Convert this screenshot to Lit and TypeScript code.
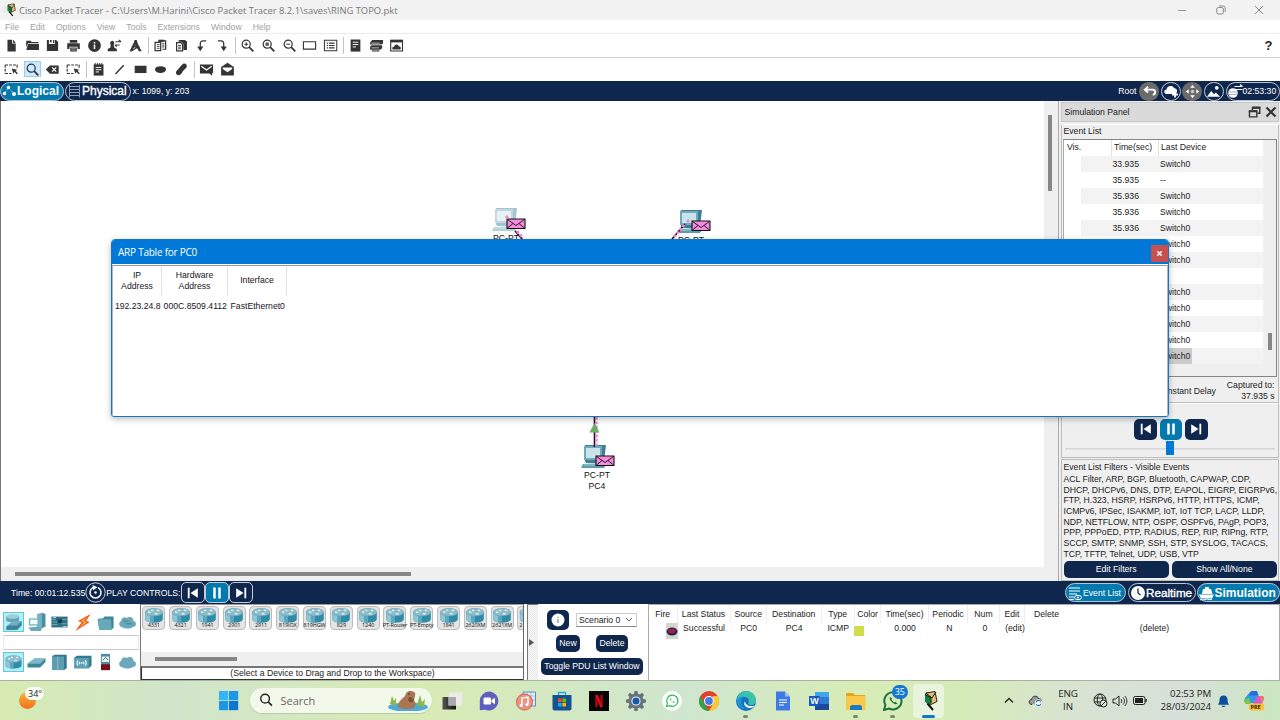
import { LitElement, html, css, svg, TemplateResult, SVGTemplateResult } from "lit";
import { customElement } from "lit/decorators.js";
import { classMap } from "lit/directives/class-map.js";

const icon = (body: SVGTemplateResult, w = 16, h = 16, vb = "0 0 16 16"): TemplateResult =>
  html`<svg width=${w} height=${h} viewBox=${vb}>${body}</svg>`;

const INK = "#333436";
const lens = svg`<circle cx="6.6" cy="6.6" r="4.3" fill="none" stroke=${INK} stroke-width="1.3"/><path d="M9.8 9.8L14.2 14.2" stroke=${INK} stroke-width="1.9"/>`;

const glyph: Record<string, SVGTemplateResult> = {
  file: svg`<path fill=${INK} d="M3.7 1.8h5v4h3.8v8.6H3.7zM9.6 1.8l3 3.2h-3z"/>`,
  folder: svg`<path fill=${INK} d="M1.3 3h4.8l1 1.3h7.3v1.4H3.3L1.3 10zM3.4 6.3h11.5v6.6H1.3z"/>`,
  save: svg`<path fill=${INK} d="M2 2.2h2.2v4.2h6.3V2.2h1.3L14 4.3v9.6H2zM5.3 2.2h1.8v2.3H5.3zM8.6 2.2h1.2v3.2H8.6z"/>`,
  print: svg`<path fill=${INK} d="M4 2h8v3H4zM1.3 5.6h13.4v6H12.3V9.3H3.7v2.3H1.3zM4.5 10h7v4.4h-7z"/><path d="M5.6 11.4h4.8M5.6 12.9h4.8" stroke="#fff" stroke-width=".5"/>`,
  info: svg`<circle cx="8" cy="8" r="6.8" fill=${INK}/><path d="M8 7v4.6M8 4.3v1.5" stroke="#fff" stroke-width="1.6"/>`,
  user: svg`<path fill=${INK} d="M5.4 3a2.3 2.6 0 0 1 1.9 4.1c-.3.5-.1 1.200.3 1.500v1.600l2.900 1.400v2.400H.8v-2.400l2.900-1.400V8.600c.4-.3.4-1 .1-1.500A2.300 2.600 0 0 1 5.400 3z"/><path d="M9 4h6M8.500 7.500h5M12.500 2L15 4M8.500 7.500l2 1.700" stroke=${INK} stroke-width="1.200" fill="none"/>`,
  compass: svg`<path fill=${INK} d="M7 2h2.300l1.200 4 3.800 8h-2.800L8 7l-3.600 7H1.500L6 6z"/><path d="M3.800 9l8.500 1.200M3.500 13.800l8.500-5M5 6L14 13.500" stroke=${INK} stroke-width="1.300"/>`,
  copy: svg`<path d="M2.200 4.700h6v8.800h-6zM5.500 3h8v9h-3.500" fill="#fff" stroke=${INK} stroke-width="1.300"/><path d="M4 7h3M4 9h3M4 11h3M9.700 5.800h2.500M9.700 7.700h2.500M9.700 9.600h2.500" stroke=${INK} stroke-width=".9"/><path d="M6 1.800h6v2.200H6z" fill=${INK}/>`,
  paste: svg`<path fill=${INK} d="M5 2h6.500l2.300 1.500v9.200H10V6.200L7.500 4H5z"/><path d="M2.800 4.900h4.400l2 1.800v7H2.800z" fill="#fff" stroke=${INK} stroke-width="1.300"/><path d="M4.300 8h3.300M4.300 9.800h3.300M4.300 11.500h3.300" stroke=${INK} stroke-width=".9"/>`,
  undo: svg`<path d="M13 3H9.500C7.300 3 6.700 4.600 6.700 6.100v5" fill="none" stroke=${INK} stroke-width="1.300"/><path d="M3.400 9h6.600L6.700 14z" fill=${INK}/>`,
  redo: svg`<path d="M3 3h3.500c2.200 0 2.800 1.600 2.800 3.100v5" fill="none" stroke=${INK} stroke-width="1.300"/><path d="M6 9h6.600L9.300 14z" fill=${INK}/>`,
  zoomin: svg`${lens}<path d="M4.600 6.600h4M6.600 4.600v4" stroke=${INK} stroke-width="1.100"/>`,
  zoomreset: svg`${lens}<circle cx="6.600" cy="6.600" r="2" fill=${INK} opacity=".8"/>`,
  zoomout: svg`${lens}<path d="M4.600 6.600h4" stroke=${INK} stroke-width="1.100"/>`,
  rect: svg`<path d="M1.500 4h13v7.800h-13z" fill="none" stroke=${INK} stroke-width="1.200"/>`,
  list: svg`<path d="M1.500 2.500h13.200v11H1.500z" fill="none" stroke=${INK} stroke-width="1.100"/><path d="M4 5.500h1.300M4 8h1.300M4 10.500h1.300M6.300 5.500h6M6.300 8h6M6.300 10.500h6" stroke=${INK} stroke-width="1.300"/>`,
  doc: svg`<path fill=${INK} d="M2.800 1.600h10.400v12.900H2.800z"/><path d="M5 4.500h6M5 7h6M5 9.500h3.500" stroke="#fff" stroke-width="1"/>`,
  stack: svg`<path fill=${INK} d="M3.500 2.200h11.500v3.600L12.800 7H1.200V4.700zM2.800 7.800h11.200v3L12 12.500H1.200V9z"/><path d="M2.500 5.500h9M2.500 10.500h8" stroke="#ddd" stroke-width=".8"/><path d="M3 13.800h8" stroke=${INK} stroke-width="1.200"/>`,
  cloudwin: svg`<path d="M1.800 2.500h12.600v11.300H1.800z" fill="#fff" stroke=${INK} stroke-width="1.200"/><path d="M1.800 2h12.600v2.700H1.800z" fill=${INK}/><path fill=${INK} d="M4 12.200C2.700 10.700 4 9 5.400 9.400 6 6.500 9.700 6.300 10.200 8.800c2.200-.2 3.100 2 1.900 3.400z"/>`,
  select: svg`<path d="M1.300 3.200h13M1.300 3v9.500M1.300 12.300h6.700M14 3v4" stroke=${INK} stroke-width="1.200" stroke-dasharray="3 1.200" fill="none"/><path d="M8.300 7l6 1.200-2 1.200 2.400 2.700-1.200 1-2.300-2.700-1.200 2z" fill=${INK}/>`,
  lens,
  erase: svg`<path fill=${INK} d="M.8 8l4.500-4.400h9.300v8.900H5.300z"/><path d="M7.600 5.800l4.400 4.400M12 5.800l-4.400 4.400" stroke="#fff" stroke-width="1.300"/>`,
  note: svg`<path fill=${INK} d="M2.900 2.500h10.400v12H2.900z"/><path d="M4.500 1v2M6.800 1v2M9.200 1v2M11.500 1v2" stroke=${INK} stroke-width="1"/><path d="M5 5.800h6M5 8.200h6M5 10.600h3.500" stroke="#fff" stroke-width="1"/>`,
  line: svg`<path d="M3.700 12.800L12.500 3.500" stroke=${INK} stroke-width="1.500"/>`,
  box: svg`<path d="M1.800 4h12.600v7.800H1.800z" fill=${INK}/>`,
  oval: svg`<ellipse cx="8" cy="8" rx="5.900" ry="3.600" fill=${INK}/>`,
  blob: svg`<path fill=${INK} d="M9.500 2c2-1.200 5 .3 4 3.200-.8 2.100-2.700 2.400-3.900 4.500-1 2-2.600 4.900-5.300 4.300-2.800-.7-2.700-4-.9-5.300C5 7.500 6.500 4.200 9.500 2z"/>`,
  mail: svg`<path fill=${INK} d="M1 2.600h14v9.100h-1v3l-3-2.500H1z"/><path d="M2.500 4.500L8 8.600l5.500-4.100" stroke="#fff" stroke-width="1.300" fill="none"/>`,
  openmail: svg`<path fill=${INK} d="M8 .8l6.800 4.500v9.200H1.200V5.300z"/><path fill="#fff" d="M3 5.800h10v1.700L8 11 3 7.500z"/>`,
};

const row1 = ["file", "folder", "save", "print", "info", "user", "compass", "|", "copy", "paste", "undo", "redo", "|",
  "zoomin", "zoomreset", "zoomout", "rect", "list", "|", "doc", "stack", "cloudwin"];
const row2 = ["select", "lens", "erase", "select", "|", "note", "line", "box", "oval", "blob", "|", "mail", "openmail"];

const routerArt = svg`<path d="M1 7v8c0 3 5 4.600 11 4.600s11-1.600 11-4.600V7z" fill="#2f8ba8"/><path d="M1 7v8c0 2 2.500 3.500 6 4.200V9z" fill="#8fc5d4"/><path d="M7 10v9.200l5 .4V10z" fill="#5ba8be"/><ellipse cx="12" cy="6.500" rx="11" ry="4.800" fill="#8dbccb" stroke="#5c9db1" stroke-width=".6"/><path d="M4.500 6l3 .6M15.500 4l3 .5M8.500 3.800l2.500.8M13 8.200l3.500.5" stroke="#f4fbfd" stroke-width="1.600"/>`;

const kit: Record<string, SVGTemplateResult> = {
  net: svg`<path d="M2 4l5-2 9 1v7l-6 1-8-2z" fill="#5fa3b5"/><ellipse cx="9" cy="4" rx="7" ry="2.500" fill="#9fccd8"/><path d="M5 13l6-4 8 0v5l-5 5H2v-4z" fill="#3d8599"/><path d="M3 14l7-5h9l-5 5z" fill="#72b1c2"/>`,
  pc: svg`<path d="M11 1l6-1 3 1v14l-4 2h-5z" fill="#4a8fa2"/><path d="M11 1l5 .5V17h-5z" fill="#74b2c3"/><path d="M1.500 6h11v8h-11z" fill="#79b4c4"/><path d="M3 7.500h8v5H3z" fill="#f4fbfc"/><path d="M1 16l11-1 4 2-1 3H4z" fill="#6ba9ba"/>`,
  board: svg`<path d="M1 4h18v12H1z" fill="#2f6f85"/><path d="M1 7h5M2 10h6M1 13h7M13 7h6M12 12h6" stroke="#78b5c6" stroke-width="1"/><path d="M8 7h5v4H8z" fill="#173f4e"/><path d="M3 5h3M14 15h4" stroke="#c1e1e9"/>`,
  bolt: svg`<path d="M19 1L5 9l4 1.500L2 20l16-10-4-1.500z" fill="#f4501c"/><path d="M16 4L8 9l4 1-6 6 9-6-4-1.500z" fill="#ffc53a"/>`,
  folder: svg`<path d="M2 6h5l2-2h10v13l-3 1H3z" fill="#3f879b"/><path d="M1 7h15l1 12H3z" fill="#67a9bb"/>`,
  cloud: svg`<path d="M5 16C0 16-.5 10 3 9c0-4 4-5 6-3.500C12 3 17 5 16.500 8.500c4 .5 4 7-.5 7-3 2-8 2.500-11 .5z" fill="#6ba9ba"/><path d="M5 9h6M8 12h7" stroke="#3f8296" stroke-width="1.100"/>`,
  router: svg`<g transform="translate(.5 1.500) scale(.8)">${routerArt}</g>`,
  sw: svg`<path d="M0 12l8-6h12v4l-6 6H0z" fill="#3d8599"/><path d="M0 12l8-6h12l-6 6z" fill="#7db8c7"/>`,
  hub: svg`<path d="M2 3l3-1h13v15l-3 2H2z" fill="#33788d"/><path d="M2 4h13v15H2z" fill="#5c9fb2"/><path d="M8 4v15" stroke="#8ec3d0"/>`,
  wifi: svg`<path d="M1 5l3-2h16v11l-3 3H1z" fill="#33788d"/><path d="M1 5.500h16V17H1z" fill="#5c9fb2"/><path d="M5 8c-1.500 2-1.500 4 0 6M7 9.500c-1 1-1 2 0 3M13 8c1.500 2 1.500 4 0 6M11 9.500c1 1 1 2 0 3" stroke="#eef8fa" stroke-width="1.200" fill="none"/><circle cx="9" cy="11" r="1" fill="#fff"/>`,
  sec: svg`<path d="M5 1h10v18H5z" fill="#4a8fa2"/><path d="M6 4h8v6H6z" fill="#eaf4f6"/><path d="M5 12.500h10V19H5z" fill="#7b0d16"/><path d="M7 8l3-3 3 3" stroke="#2b6072" fill="none"/>`,
  wan: svg`<path d="M5 16C0 16-.5 10 3 9c0-4 4-5 6-3.500C12 3 17 5 16.500 8.500c4 .5 4 7-.5 7-3 2-8 2.500-11 .5z" fill="#6ba9ba"/>`,
};

const pcArt = (op: number) => svg`<g opacity=${op}><path d="M4 1h21l-2 17H4z" fill="#3e7f93"/><path d="M3 2h18v14H3z" fill="#6fa9bb"/><path d="M5 4h14v10H5z" fill="#c8e3ea"/><path d="M5 17h17l1 2H5z" fill="#3e7f93"/><path d="M2 20l22-1 2 1-3 4H0z" fill="#5d9db0"/><path d="M3 21h17" stroke="#a5cdd7"/></g>`;
const envelope = svg`<path d="M.500.500h18v9.500H.500z" fill="#f58ade" stroke="#111" stroke-width="1.100"/><path d="M1 1l8.500 6L18 1M1 9.500l5.500-4.500M18 9.500l-5.500-4.500" fill="none" stroke="#111" stroke-width=".9"/>`;

const playIcons: Record<string, SVGTemplateResult> = {
  prev: svg`<path d="M3.700 2.700v10.600" stroke="#fff" stroke-width="1.800"/><path d="M12.800 3.200v9.600L5.500 8z" fill="#fff"/>`,
  pause: svg`<path d="M5.500 2.500v11M10.500 2.500v11" stroke="#fff" stroke-width="2.500"/>`,
  next: svg`<path d="M12.300 2.700v10.600" stroke="#fff" stroke-width="1.800"/><path d="M3.200 3.200v9.600L10.500 8z" fill="#fff"/>`,
};

const playButtons = () => html`${["prev", "pause", "next"].map(
  (k) => html`<span class=${classMap({ play: true, on: k === "pause" })}>${icon(playIcons[k], 16, 16)}</span>`)}`;

@customElement("pt-toolbar")
class PtToolbar extends LitElement {
  static properties = { items: { attribute: false }, active: {}, help: { type: Boolean } };
  declare items: string[];
  declare active: string;
  declare help: boolean;
  static styles = css`
    :host { display: flex; align-items: center; padding-left: 1.4px; background: #fff; box-sizing: border-box; }
    .cell { width: 20.6px; flex: none; display: flex; justify-content: center; }
    .cell span { display: flex; justify-content: center; align-items: center; width: 17px; height: 16px; }
    .cell .on { background: #cce8ff; outline: 1px solid #99cdf3; outline-offset: -1px; }
    .sep { width: 1px; height: 17px; background: #c4c4c4; margin: 0 1.5px 0 2.3px; flex: none; }
    .help { margin-left: auto; margin-right: 7.5px; font: bold 13px "Liberation Sans", sans-serif; color: #222; }
    svg { width: 15px; height: 15px; }
  `;
  render() {
    return html`${this.items.map((n) => n === "|" ? html`<i class="sep"></i>`
      : html`<div class="cell"><span class=${classMap({ on: n === this.active })}>${icon(glyph[n])}</span></div>`)}
      ${this.help ? html`<b class="help">?</b>` : ""}`;
  }
}

@customElement("pt-workspace")
class PtWorkspace extends LitElement {
  static styles = css`
    :host { display: grid; grid-template: 466px 14px / 1043px 14px; background: #efefef; border-left: 1px solid #777; box-sizing: border-box; width: 1058px; height: 480px; }
    .canvas { position: relative; background: #fff; overflow: hidden; }
    .links { position: absolute; inset: 0; }
    .node { position: absolute; width: 34px; font: 8.67px/11px "Liberation Sans", sans-serif; color: #111; text-align: center; }
    .node svg { display: block; }
    .vbar { padding: 14px 0 0 4px; }
    .vbar i { display: block; width: 4px; height: 76px; background: #868686; }
    .hbar { grid-column: 1 / 3; padding: 5px 0 0 14px; }
    .hbar i { display: block; width: 396px; height: 4px; background: #868686; }
    .a { left: 491px; top: 106px; }
    .b { left: 676px; top: 108px; }
    .c { left: 580px; top: 343px; }
    .a .name, .b .name { margin-left: -6px; }
    .c .name { margin-left: -2px; }
  `;
  node(cls: string, label: string[], op: number) {
    return html`<div class="node ${cls}">
      ${icon(svg`<g>${pcArt(op)}</g><g transform="translate(14.5 11.5)">${envelope}</g>`, 34, 26, "0 0 34 26")}
      ${label.map((l) => html`<div class="name">${l}</div>`)}</div>`;
  }
  render() {
    return html`
      <div class="canvas">
        ${this.node("a", ["PC-PT"], 0.45)} ${this.node("b", ["PC-PT"], 1)} ${this.node("c", ["PC-PT", "PC4"], 1)}
        <svg class="links" width="1043" height="466">
          <path d="M514 130l8 9M671 138l13-15M593.5 316v30" stroke="#111" stroke-width="1.6"/>
          <path d="M505 115l3 3M516 130l6 7M673 136l11-13M686 121l2-2M595.3 316v29" stroke="#ef85d8" stroke-width="2.8" stroke-dasharray="2.8 1.6"/>
          <path d="M593.5 322l5 9.5h-10z" fill="#6cae62"/>
        </svg>
      </div>
      <div class="vbar"><i></i></div>
      <div class="hbar"><i></i></div>`;
  }
}

const events: [string, string][] = [["33.935", "Switch0"], ["35.935", "--"], ["35.936", "Switch0"], ["35.936", "Switch0"],
  ["35.936", "Switch0"], ["35.937", "Switch0"], ["35.937", "Switch0"], ["37.932", "--"], ["37.933", "Switch0"],
  ["37.933", "Switch0"], ["37.934", "Switch0"], ["37.934", "Switch0"], ["37.935", "Switch0"]];
const filters = ["ACL Filter, ARP, BGP, Bluetooth, CAPWAP, CDP,", "DHCP, DHCPv6, DNS, DTP, EAPOL, EIGRP, EIGRPv6,",
  "FTP, H.323, HSRP, HSRPv6, HTTP, HTTPS, ICMP,", "ICMPv6, IPSec, ISAKMP, IoT, IoT TCP, LACP, LLDP,",
  "NDP, NETFLOW, NTP, OSPF, OSPFv6, PAgP, POP3,", "PPP, PPPoED, PTP, RADIUS, REP, RIP, RIPng, RTP,",
  "SCCP, SMTP, SNMP, SSH, STP, SYSLOG, TACACS,", "TCP, TFTP, Telnet, UDP, USB, VTP"];

@customElement("pt-simulation")
class PtSimulation extends LitElement {
  static styles = css`
    :host { display: flex; flex-direction: column; width: 222px; height: 480px; box-sizing: border-box; padding: 1px 1px 0 2px; background: #efefef; border-left: 1px solid #aaa; font: 8.67px/12px "Liberation Sans", sans-serif; color: #1b1b22; }
    .head { height: 20px; background: #dadada; border: 1px solid #c6c6c6; box-sizing: border-box; display: flex; align-items: center; padding: 0 1px 0 2.5px; margin-bottom: 2px; }
    .head span { flex: 1; }
    .gap { width: 4px; }
    .group { border: 1px solid #bdbdbd; border-top-color: #fff; box-sizing: border-box; }
    .list { height: 279px; display: flex; flex-direction: column; }
    .cap { height: 14px; padding-left: 1.5px; line-height: 13px; }
    .table { height: 239px; box-sizing: border-box; border: 1px solid #858585; border-left-color: #aaa; margin: 0 1px 0 1px; display: grid; grid-template: 16px 1fr / 199px 1fr; }
    .th { background: #fff; display: grid; grid-template-columns: 46.5px 47px 1fr; align-items: center; }
    .th span { padding-left: 2.5px; border-left: 1px solid #e3e3e3; line-height: 15px; height: 16px; }
    .th span:first-child { border: 0; padding-left: 3px; }
    .body { background: #fff; height: 208px; grid-row: 2; }
    .tr { height: 16px; margin-left: 17px; display: grid; grid-template-columns: 29.5px 47.5px auto 1fr; line-height: 16.5px; }
    .tr span { padding-left: 2px; }
    .tr:nth-child(odd) { background: #f3f3f3; }
    .tr .sel { background: #cbcbcb; padding-right: 2px; }
    .thumb { grid-column: 2; grid-row: 2; width: 4px; height: 17px; background: #868686; margin: 177px 0 0 5px; }
    .opts { flex: 1; display: flex; justify-content: flex-end; align-items: center; line-height: 11px; gap: 11px; padding: 3px 3.5px 0 0; text-align: right; }
    .ctl { height: 55px; padding: 15px 0 0 2px; }
    .plays { display: flex; justify-content: center; gap: 2.7px; }
    .play { width: 22.7px; height: 20.5px; border-radius: 5px; background: #10274d; display: flex; align-items: center; justify-content: center; }
    .on { background: #0479ad; }
    .slider { height: 14px; margin: 1.5px 3px 0 1px; display: flex; justify-content: center; background: linear-gradient(#d6d6d6, #d6d6d6) 0 7px / 100% 1.5px no-repeat; }
    .slider i { width: 8px; height: 14px; background: #0078d7; }
    .flt { height: 122px; margin-top: 1px; border-top: 1px solid #bdbdbd; padding: 1px 1px 0 1.5px; white-space: nowrap; }
    .names { line-height: 10.67px; margin-top: 1px; }
    .btns { display: grid; grid-template-columns: 1fr 1fr; gap: 3px; margin: 2px 0 0; }
    .btns b { font-weight: 400; background: #10274d; color: #fff; border-radius: 5px; height: 17px; line-height: 17px; text-align: center; }
  `;
  render() {
    return html`
      <div class="head"><span>Simulation Panel</span>
        ${icon(svg`<path d="M5.500 5V2.500h9v6.500H12M1.800 6.500h9v7h-9z" fill="none" stroke="#333" stroke-width="1.700"/><path d="M1 6.500h10.500M5 2h10.300" stroke="#333" stroke-width="2.600"/>`, 13, 14, "0 0 16 15")}
        <i class="gap"></i>
        ${icon(svg`<path d="M2 2l12 12M14 2L2 14" stroke="#333" stroke-width="3"/>`, 12, 12)}</div>
      <div class="group list">
        <div class="cap">Event List</div>
        <div class="table">
          <div class="th"><span>Vis.</span><span>Time(sec)</span><span>Last Device</span></div>
          <div class="body">${events.map(([t, d], i) => html`<div class="tr"><i></i><span>${t}</span><span class=${classMap({ sel: i === events.length - 1 })}>${d}</span></div>`)}</div>
          <i class="thumb"></i>
        </div>
        <div class="opts"><span>Constant Delay</span><span>Captured to:<br />37.935 s</span></div>
      </div>
      <div class="group ctl"><div class="plays">${playButtons()}</div><div class="slider"><i></i></div></div>
      <div class="group flt"><div>Event List Filters - Visible Events</div>
        <div class="names">${filters.map((f) => html`<div>${f}</div>`)}</div>
        <div class="btns"><b>Edit Filters</b><b>Show All/None</b></div></div>`;
  }
}

@customElement("pt-arp")
class PtArp extends LitElement {
  static styles = css`
    :host { display: flex; flex-direction: column; box-sizing: border-box; width: 1058px; height: 178px; background: #fff; border: 1px solid #1a74bd; border-radius: 4px 4px 3px 3px; box-shadow: 0 2px 6px rgba(0, 0, 0, .28); overflow: hidden; font: 8.67px/10.67px "Liberation Sans", sans-serif; color: #15151c; }
    .bar { height: 24px; background: #0078d7; color: #fff; display: flex; align-items: center; justify-content: space-between; padding: 0 .5px 0 6px; font: 10px "Open Sans", sans-serif; letter-spacing: -.24px; flex: none; }
    .x { width: 16.5px; height: 16.5px; margin-top: 3px; background: #c75050; display: flex; align-items: center; justify-content: center; }
    .in { flex: 1; margin-top: 1px; border: 1px solid #b0b6c4; border-top-color: #9a9a9a; border-bottom: 0; }
    .grid { display: grid; grid-template: 29px 22px / 49px 66px 59px; text-align: center; align-items: center; }
    .h { height: 29px; display: flex; align-items: center; justify-content: center; border-right: 1px solid #e2e2e2; }
    .grid span { white-space: nowrap; padding-left: .5px; }
  `;
  render() {
    return html`<div class="bar"><span>ARP Table for PC0</span><span class="x">${icon(svg`<path d="M2 2l4 4M6 2L2 6" stroke="#fff" stroke-width="1.200"/>`, 9, 9, "0 0 8 8")}</span></div>
      <div class="in"><div class="grid"><div class="h">IP<br />Address</div><div class="h">Hardware<br />Address</div><div class="h">Interface</div>
        <span>192.23.24.8</span><span>000C.8509.4112</span><span>FastEthernet0</span></div></div>`;
  }
}

const models = ["4331", "4321", "1941", "2901", "2911", "819IOX", "819HGW", "829", "1240", "PT-Router", "PT-Empty", "1841", "2620XM", "2621XM"];

@customElement("pt-bottom")
class PtBottom extends LitElement {
  static styles = css`
    :host { display: flex; height: 76px; background: #fff; font: 8.67px/12px "Liberation Sans", sans-serif; color: #1b1b22; }
    .kit { width: 141px; box-sizing: border-box; padding: 7.5px 1px 0 3px; border-right: 1px solid #777; }
    .line { display: grid; grid-template-columns: repeat(6, 22.9px); }
    .line span { display: flex; justify-content: center; align-items: center; width: 21px; height: 20px; box-sizing: border-box; }
    .line .on { background: #aef0f7; border: 1px solid #6cc5d3; }
    .kit .find { height: 15px; margin: 3px 0 2.5px; box-sizing: border-box; border: 1px solid #c9c9c9; border-left-color: #e8e8e8; border-right-color: #e8e8e8; }
    .devs { width: 383px; display: flex; flex-direction: column; border-top: 1px solid #999; border-right: 1px solid #666; box-sizing: border-box; }
    .cards { height: 48px; display: flex; gap: 3.8px; padding: 1px 0 0 1.3px; overflow: hidden; box-sizing: border-box; }
    .card { width: 23px; height: 24px; flex: none; box-sizing: border-box; border: 1px solid #bbb; border-radius: 4px; background: #e4e4e4; text-align: center; font: 5.5px/7px "Open Sans", sans-serif; color: #111; white-space: nowrap; }
    .card svg { display: block; margin: 0 auto; }
    .card span { display: block; margin: -1.5px -3px 0; letter-spacing: -.1px; }
    .cut { flex: 1; width: auto; min-width: 0; border-right: 0; border-radius: 4px 0 0 4px; }
    .cut svg { margin: 0 0 0 .5px; }
    .cut span { margin: -1.5px 0 0; }
    .scroll { height: 14px; background: #efefef; padding: 5px 0 0 14px; box-sizing: border-box; }
    .scroll i { display: block; width: 82px; height: 4px; background: #868686; }
    .hint { flex: 1; border: 1px solid #333; border-top: 2px solid #777; border-right: 0; text-align: center; line-height: 11px; }
    .grip { width: 11px; margin-left: 3px; border-left: 1px solid #777; border-top: 1px solid #777; box-sizing: border-box; background: repeating-conic-gradient(#e6e6e6 0 25%, #fbfbfb 0 50%) 0 0 / 2px 2px; display: flex; align-items: center; }
    .scen { width: 110px; box-sizing: border-box; display: flex; flex-direction: column; padding: 5.5px 5px 0 3px; background: #fff; gap: 5.7px; }
    .r { display: flex; align-items: center; }
    .info { width: 22px; height: 20px; background: #10274d; border-radius: 5px; margin: 0 7px 0 6px; display: flex; align-items: center; justify-content: center; }
    .combo { width: 61px; height: 14px; border: 1px solid #ccc; border-bottom-color: #888; box-sizing: border-box; display: flex; align-items: center; justify-content: space-between; padding: 0 3px 0 2px; white-space: nowrap; }
    .btn { background: #10274d; color: #fff; border-radius: 5px; height: 17px; line-height: 17px; text-align: center; white-space: nowrap; }
    .new { width: 24px; margin-left: 15px; } .del { width: 32px; margin-left: 16px; }
    .pdus { flex: 1; border: 1px solid #aaa; border-bottom: 0; box-sizing: border-box; display: grid; align-content: start; grid-template-columns: 28.5px 53px 36.5px 54.5px 33.5px 26px 48px 39px 32px 25px 1fr; grid-template-rows: 18px 17px; text-align: center; }
    .pdus span { line-height: 19px; border-right: 1px solid #eee; white-space: nowrap; }
    .pdus .last { text-align: left; padding-left: 9px; border: 0; }
    .pdus u { text-decoration: none; line-height: 11.5px; padding-left: 2px; white-space: nowrap; }
    .pdus .far { padding-left: 5px; }
    .pdus .near { padding-left: 0; }
    .fire { width: 12px; height: 16px; background: #d4d4d4; justify-self: end; padding: 0 !important; display: flex; align-items: center; }
    .color { display: block; width: 10px; height: 10px; background: #d0de4c; margin: 3px 0 0 -3px; }
  `;
  render() {
    return html`
      <div class="kit">
        <div class="line">${["net", "pc", "board", "bolt", "folder", "cloud"].map((k, i) => html`<span class=${classMap({ on: !i })}>${icon(kit[k], 19, 18, "0 0 20 20")}</span>`)}</div>
        <div class="find"></div>
        <div class="line">${["router", "sw", "hub", "wifi", "sec", "wan"].map((k, i) => html`<span class=${classMap({ on: !i })}>${icon(kit[k], 19, 18, "0 0 20 20")}</span>`)}</div>
      </div>
      <div class="devs">
        <div class="cards">${models.map((m) => html`<div class="card">${icon(routerArt, 20, 16, "0 0 24 20")}<span>${m}</span></div>`)}
          <div class="card cut">${icon(routerArt, 6, 16, "0 0 7.200 20")}<span>2</span></div></div>
        <div class="scroll"><i></i></div>
        <div class="hint">(Select a Device to Drag and Drop to the Workspace)</div>
      </div>
      <div class="grip">${icon(svg`<path d="M1 0l5 3.500L1 7z" fill="#555"/>`, 7, 7, "0 0 7 7")}</div>
      <div class="scen">
        <div class="r"><span class="info">${icon(svg`<circle cx="7" cy="7" r="6.500" fill="#fff"/><path d="M7 6v4M7 3.700v1.200" stroke="#777" stroke-width="1.100"/>`, 14, 14, "0 0 14 14")}</span>
          <span class="combo">Scenario 0 ${icon(svg`<path d="M1 2l3 3 3-3" stroke="#666" fill="none"/>`, 8, 7, "0 0 8 7")}</span></div>
        <div class="r"><span class="btn new">New</span><span class="btn del">Delete</span></div>
        <div class="btn">Toggle PDU List Window</div>
      </div>
      <div class="pdus">
        ${["Fire", "Last Status", "Source", "Destination", "Type", "Color", "Time(sec)", "Periodic", "Num", "Edit"].map((h) => html`<span>${h}</span>`)}<span class="last">Delete</span>
        <u class="fire">${icon(svg`<ellipse cx="6" cy="4.500" rx="5.500" ry="4" fill="#1a2a3c"/><ellipse cx="5.700" cy="4" rx="3.800" ry="2.500" fill="#a01f4b"/>`, 12, 9, "0 0 12 9")}</u>
        <u class="near">Successful</u><u class="near">PC0</u><u class="near">PC4</u><u class="near">ICMP</u><u><i class="color"></i></u><u class="near">0.000</u><u>N</u><u>0</u><u class="far">(edit)</u><u class="far">(delete)</u>
      </div>`;
  }
}

const gear = Array.from({ length: 8 }, (_, i) => svg`<path d="M8.500 0h3l.7 4h-4.400z" fill="#68737d" transform=${`rotate(${i * 45} 10 10)`}/>`);
const apps: Record<string, SVGTemplateResult> = {
  desk: svg`<defs><linearGradient id="dk" x2="1"><stop stop-color="#555"/><stop offset="1" stop-color="#111"/></linearGradient></defs><path d="M.5 6H14v12.500H.5z" fill="url(#dk)"/><path d="M6.500 1.500H20v13H6.500z" fill="#ececec" opacity=".9"/><path d="M6.500 6H14v8.500H6.500z" fill="#aaa"/>`,
  meet: svg`<path d="M10 .5a9.500 9.500 0 1 1-4 18.200L.8 19.200V10A9.500 9.500 0 0 1 10 .5z" fill="#5f5fc0"/><rect x="4.500" y="6.500" width="7.500" height="7" rx="1.300" fill="#fff"/><path d="M12.500 9l3.500-2.300v6.600L12.500 11z" fill="#fff"/>`,
  music: svg`<path d="M7 1h12.500v14H7z" fill="#e7eef8" stroke="#5a88c9"/><path d="M7 5h12M7 9h12M11 1v14M15 1v14" stroke="#89a9d8" stroke-width=".7"/><circle cx="8.500" cy="11" r="8.500" fill="#ec8a78" opacity=".88"/><circle cx="8.500" cy="11" r="8" fill="none" stroke="#d9503c" opacity=".7"/><path d="M6 14.500V7l6-1v7.500" fill="none" stroke="#fff" stroke-width="1.400"/><circle cx="5" cy="14.500" r="1.600" fill="#fff"/><circle cx="11" cy="13.500" r="1.600" fill="#fff"/>`,
  store: svg`<path d="M6.500 5V1.500h7V5" fill="none" stroke="#2aa5e8" stroke-width="1.400"/><path d="M.500 4h19v13.500c0 1-1 2-2 2h-15c-1 0-2-1-2-2z" fill="#14538f"/><path d="M6 7.500h3.600v3.600H6z" fill="#f25022"/><path d="M10.400 7.500H14v3.600h-3.600z" fill="#7fba00"/><path d="M6 11.900h3.600v3.600H6z" fill="#1fa4ef"/><path d="M10.400 11.900H14v3.600h-3.600z" fill="#ffb900"/>`,
  netflix: svg`<path d="M0 0h20v20H0z" fill="#050505"/><path d="M7.500 16V4M12.500 16V4" stroke="#b20710" stroke-width="2.300"/><path d="M6.400 4h2.500l4.700 12h-2.500z" fill="#e50914"/>`,
  gear: svg`${gear}<circle cx="10" cy="10" r="7.500" fill="#68737d"/><circle cx="10" cy="10" r="4.600" fill="#e9eef2"/><circle cx="10" cy="10" r="3.500" fill="#1558a5"/>`,
  wa: svg`<circle cx="10" cy="10" r="10" fill="#fff"/><path d="M4.500 15.500l.9-3.200A5.600 5.600 0 1 1 7.700 14.600z" fill="none" stroke="#27b95a" stroke-width="1.200"/><path d="M8 7c-1.200 1.200 3.300 6 5 4.500l-1.600-1.200-.9.600-1.700-1.900.5-.8z" fill="#27b95a"/>`,
  chrome: svg`<circle cx="10" cy="10" r="10" fill="#e33e2f"/><path d="M1.340 5L6 13.500 10 20A10 10 0 0 1 1.340 5z" fill="#2fa24c"/><path d="M18.660 5A10 10 0 0 1 10 20l4.500-8-1-7z" fill="#fcc934"/><circle cx="10" cy="10" r="5" fill="#fff"/><circle cx="10" cy="10" r="3.900" fill="#3f7ee8"/>`,
  edge: svg`<circle cx="10" cy="10" r="10" fill="#1373c4"/><path d="M1 10C1 4 5 0 10.500 0 16 0 20 4.500 20 9c0 3-2 5-5 5-2 0-3.500-1-2.500-2.500C14 8 11 6 8 6c-3 0-6 1-7 4z" fill="#38c3a8"/><path d="M1 10c1-3.500 4-5 7-4.500-4 2-4 9 1 12-4 1-8-3-8-7.500z" fill="#1a95d8"/><path d="M9 10c0 3 3 5.500 8 5 1.500-.5 1.500 0 .5 1-3 2.500-9 .500-9.500-3.500z" fill="#e7f3d8"/>`,
  docs: svg`<path d="M3 .5h9l5 5v14H3z" fill="#3e7ae6"/><path d="M12 .5l5 5h-5z" fill="#9bbcf5"/><path d="M6 9h8M6 11.500h8M6 14h5" stroke="#fff" stroke-width="1.200"/>`,
  word: svg`<path d="M6 1h14v18H6z" fill="#2f7bd0"/><path d="M6 1h14v5H6z" fill="#41a5ee"/><path d="M6 13h14v6H6z" fill="#1b4a9c"/><path d="M0 5h10.500v10H0z" fill="#185abd"/><text x="1.200" y="13.300" font-family="Liberation Sans" font-weight="700" font-size="9" fill="#fff">W</text>`,
  files: svg`<path d="M0 2h7l2 2h10v5H0z" fill="#e8a417"/><path d="M0 5h19.500v14H0z" fill="#fbc94a"/><path d="M4 19v-3c0-1 1-2 2-2h8c1 0 2 1 2 2v3z" fill="#1a7ac2"/>`,
  waDesk: svg`<path d="M1 19l1.400-5A8.600 8.600 0 1 1 6 17.500z" fill="none" stroke="#18743a" stroke-width="2"/><path d="M7 6c-2 2 4.500 9.500 7.500 6.500l-2.400-1.700-1.200.8-2.500-2.800.7-1.200z" fill="#18743a"/>`,
  pt: svg`<path d="M8 2l9-1.500 2 10-8 4-4-6z" fill="#e0bd72" stroke="#222" stroke-width="1"/><path d="M8 2l6 5 4-6" stroke="#222" fill="none"/><circle cx="6" cy="9.500" r="5.500" fill="#e6ebe6" opacity=".85"/><path d="M7 3.500l6 3v6l-3 1-3-3z" fill="#12823a"/><path d="M7 3.500l6 3v6" stroke="#111" fill="none"/><path d="M9.500 12.500l5.500 6.500" stroke="#111" stroke-width="2"/>`,
};
const running: Record<string, string> = { edge: "dot", files: "dot", waDesk: "dot", pt: "dot wide" };

@customElement("win-taskbar")
class WinTaskbar extends LitElement {
  static styles = css`
    :host { display: flex; align-items: center; height: 40px; box-sizing: border-box; border-top: 1px solid #a9b4a0; background: linear-gradient(90deg, #d7ebb2 0, #d0e4ca 170px, #d2e6c8 210px, #d8ebb4 420px, #d3e8c2 560px, #cfe6cf 690px, #d8ecb6 850px, #d5ebb8 960px, #d8e3d2 1080px, #d7e0d8 1180px, #cce6c2 1280px); font: 10.5px "Open Sans", sans-serif; color: #222; }
    svg { display: block; }
    .weather { width: 216px; padding-left: 18px; box-sizing: border-box; }
    .weather div { position: relative; width: 26px; height: 24px; }
    .weather b { position: absolute; left: 7px; top: -2px; background: #fbfdf7; border-radius: 8px; padding: 0 2px 0 3px; font: 9px/13px "Open Sans", sans-serif; }
    .win { width: 34px; }
    .search { width: 182px; height: 25px; border-radius: 13px; background: #f3f9ea; display: flex; align-items: center; padding: 0 3px 0 9px; box-sizing: border-box; gap: 6.500px; color: #666; font-size: 11px; box-shadow: 0 1px 1px #b9c8a6; }
    .search span { flex: 1; }
    .apps { display: flex; margin-left: 2px; }
    .app { position: relative; width: 36.7px; height: 34px; display: flex; align-items: center; justify-content: center; }
    .app.on { background: #e9f4dd; border-radius: 4px; width: 31px; margin-left: 2px; }
    .dot { position: absolute; bottom: 0; left: 50%; width: 5px; height: 2.5px; margin-left: -2.5px; border-radius: 2px; background: #7a8871; }
    .wide { width: 13px; margin-left: -6.5px; background: #1474cf; }
    .badge { position: absolute; top: 1px; right: 3px; background: #1276d3; color: #fff; font: 9px/14px "Open Sans", sans-serif; border-radius: 8px; padding: 0 3px; }
    .tray { margin-left: auto; display: flex; align-items: center; padding-right: 16px; }
    .tray svg { flex: none; }
    .lang { width: 24px; text-align: center; line-height: 13.3px; margin: -1px 12.5px 0 13px; font-size: 9.8px; letter-spacing: -.1px; }
    .clock { width: 54.5px; text-align: right; line-height: 13.3px; margin: -1px 6px 0 10px; font-size: 9.7px; white-space: nowrap; letter-spacing: -.1px; }
    .g4 { width: 4px; } .g5 { width: 5px; } .g14 { width: 14px; }
  `;
  render() {
    return html`
      <div class="weather"><div>${icon(svg`<defs><linearGradient id="s" x2="0" y2="1"><stop stop-color="#f8b33c"/><stop offset="1" stop-color="#f0701c"/></linearGradient></defs><circle cx="9.500" cy="11.500" r="8.500" fill="url(#s)"/>`, 26, 24, "0 0 26 24")}<b>34°</b></div></div>
      <div class="win">${icon(svg`<path d="M0 0h9.200v9.200H0z" fill="#35b4f4"/><path d="M10 0h9.200v9.200H10zM0 10h9.200v9.200H0z" fill="#1c97e6"/><path d="M10 10h9.200v9.200H10z" fill="#0c76d0"/>`, 25, 20, "-3 0 25 20")}</div>
      <div class="search">${icon(svg`<circle cx="6.500" cy="6" r="4.600" fill="none" stroke="#222" stroke-width="1.500"/><path d="M9.800 9.500l4 4" stroke="#222" stroke-width="1.700"/>`, 15, 15)}<span>Search</span>
        ${icon(svg`<ellipse cx="21" cy="17" rx="20" ry="4.500" fill="#4fa9d8"/><path d="M3 14l2-8 2 5 2-3v8zM30 15l3-10 2 7 3-3-1 8z" fill="#8ab84a"/><path d="M11 17c0-6 4-8 7-11 1-3 2-5 6-5 4 0 5 3 4 5l-1 4c2 3 2 6 0 8-5 1.500-12 1.500-16-1z" fill="#a87650"/><path d="M22 7c3 0 4 2 5 3-2 3-4 3-6 0z" fill="#7c4f32"/><circle cx="22" cy="4" r=".8" fill="#222"/>`, 42, 21, "0 0 42 21")}</div>
      <div class="apps">${Object.keys(apps).map((k) => html`<div class=${classMap({ app: true, on: k === "pt" })}>${icon(apps[k], 20, 20, "0 0 20 20")}
        ${running[k] ? html`<i class=${running[k]}></i>` : ""}${k === "waDesk" ? html`<b class="badge">35</b>` : ""}</div>`)}</div>
      <div class="tray">
        ${icon(svg`<path d="M1 6.500l4-4 4 4" fill="none" stroke="#222" stroke-width="1.300"/>`, 10, 9, "0 0 10 9")}
        <i class="g14"></i>
        ${icon(svg`<path d="M4 10.500C.5 10.500 0 6 3.500 5.500 4 1.500 9.500 1 10.500 4.500c3 0 4 3 2.500 5" fill="#999" stroke="#333"/><circle cx="10.500" cy="9" r="3.700" fill="#fff"/><path d="M8 8.500a2.600 2.600 0 0 1 4.800-.8M13 9.500a2.600 2.600 0 0 1-4.800.8" fill="none" stroke="#1671c9" stroke-width="1.200"/>`, 15, 14, "0 0 15 14")}
        <div class="lang">ENG<br />IN</div>
        ${icon(svg`<circle cx="7" cy="7" r="6" fill="none" stroke="#222"/><ellipse cx="7" cy="7" rx="2.700" ry="6" fill="none" stroke="#222"/><path d="M1 5h12M1 9h12" stroke="#222"/><circle cx="10.500" cy="10.500" r="3.500" fill="#dde5d8" stroke="#222"/><path d="M8.200 12.800l4.600-4.600" stroke="#222"/>`, 15, 15, "0 0 15 15")}
        <i class="g4"></i>
        ${icon(svg`<path d="M1 5h2.500L7 2v10L3.500 9H1z" fill="none" stroke="#222"/><path d="M9 5c1 1.300 1 2.700 0 4M11 3.500c2 2.300 2 4.700 0 7M12.800 2c2.800 3.300 2.800 6.700 0 10" fill="none" stroke="#222" stroke-width=".9"/>`, 16, 14, "0 0 16 14")}
        <i class="g5"></i>
        ${icon(svg`<rect x=".5" y=".5" width="11.500" height="8" rx="1.800" fill="none" stroke="#222"/><path d="M2 2h8v5H2z" fill="#222"/><path d="M13 3v3" stroke="#222" stroke-width="1.400"/>`, 14, 9, "0 0 14 9")}
        <div class="clock">02:53 PM<br />28/03/2024</div>
        ${icon(svg`<path d="M7 1c3 0 4.300 2 4.300 4.500 0 3 .7 4 1.500 5.500H1.200C2 9.500 2.700 8.500 2.700 5.500 2.700 3 4 1 7 1z" fill="#0d4f9c"/><path d="M5 12h4c0 2-4 2-4 0z" fill="#0d4f9c"/>`, 13, 14, "0 0 14 14")}
        <i class="g14"></i>
        ${icon(svg`<path d="M6 1h7l2 5-4 6H2C0 11 0 9 1 7z" fill="#2d9be8"/><path d="M7 0h6l1.500 4.500H5z" fill="#2a6fd6"/><path d="M1 8l4-1 2 6H2C0 12 0 10 1 8z" fill="#7ac74c"/><path d="M13 5h5c2 0 2 2 1.500 4l-2 6H8z" fill="#d15bc7"/><path d="M15 5h3c2 0 2 2 1.500 4L18 12z" fill="#f2786b"/><rect x="5" y="12.500" width="15" height="7" rx="2" fill="#fbc02d"/><text x="6.500" y="18.200" font-family="Open Sans" font-weight="700" font-size="5.500" fill="#222">PRE</text>`, 20, 20, "0 0 20 20")}
      </div>`;
  }
}

@customElement("app-root")
class AppRoot extends LitElement {
  static styles = css`
    :host { display: flex; flex-direction: column; position: relative; width: 1280px; height: 720px; overflow: hidden; background: #fff; font: 8.67px/12px "Liberation Sans", sans-serif; }
    .title { height: 20px; background: #f2f2f2; display: flex; align-items: center; color: #777; font: 9.4px "Open Sans", sans-serif; padding: 0 16px 0 3px; box-sizing: border-box; gap: 3px; }
    .title .t { flex: 1; white-space: nowrap; }
    .wb { display: flex; gap: 28.5px; }
    .menu { height: 14px; display: flex; gap: 11px; padding-left: 5px; color: #a2a2a2; line-height: 15px; border-bottom: 1px solid #ececec; box-sizing: border-box; }
    .t1 { height: 24px; border-bottom: 1px solid #d4d4d4; }
    .t2 { height: 23px; padding-bottom: 1px; }
    .nav { background: #10274d; color: #fff; display: flex; align-items: center; box-sizing: border-box; white-space: nowrap; }
    .top { height: 20px; }
    .pill { height: 19px; box-sizing: border-box; border: 1px solid #b9c6d8; border-radius: 10px; display: flex; align-items: center; font-size: 12px; }
    .pill.on { background: #0479ad; }
    .b { font-weight: 700; }
    .m { -webkit-text-stroke: .35px #fff; }
    .small { font-size: 8.67px; }
    .push { margin-left: auto; }
    .logical { width: 63.5px; }
    .physical { width: 66px; margin: 0 1.5px; }
    .clock { width: 54px; margin: 0 .5px 0 1.5px; }
    .evlist { width: 60.5px; }
    .real { width: 68px; margin: 0 .5px 0 2.5px; font-size: 11.7px; }
    .sim { width: 83.5px; }
    .round { width: 20px; height: 19px; border-radius: 10px; box-sizing: border-box; display: flex; align-items: center; justify-content: center; margin-left: 1.2px; }
    .grey { background: #6b6b6b; }
    .first { margin-left: 3px; }
    .ring { border: 1px solid #c3cddb; width: 20.5px; }
    .main { display: flex; height: 480px; }
    .foot { height: 23px; padding-left: 11px; }
    .play { width: 23.5px; height: 21px; border-radius: 5px; border: 1px solid #c3cddb; box-sizing: border-box; display: flex; align-items: center; justify-content: center; margin-left: .5px; }
    .play.on { background: #0479ad; }
    .dialog { position: absolute; left: 111px; top: 239px; }
  `;
  render() {
    return html`
      <div class="title">${icon(apps.pt, 13, 14, "0 0 20 20")}<span class="t">Cisco Packet Tracer - C:\\Users\\M.Harini\\Cisco Packet Tracer 8.2.1\\saves\\RING TOPO.pkt</span>
        <span class="wb">${icon(svg`<path d="M1 5.500h8" stroke="#999"/>`, 10, 10, "0 0 10 10")}
        ${icon(svg`<rect x=".8" y="2.500" width="6.500" height="6.500" rx="1.500" fill="none" stroke="#888"/><path d="M3 1h4.500c1 0 1.700.7 1.700 1.700V7" fill="none" stroke="#888"/>`, 10, 10, "0 0 10 10")}
        ${icon(svg`<path d="M1 1l8 8M9 1L1 9" stroke="#888"/>`, 10, 10, "0 0 10 10")}</span></div>
      <div class="menu">${["File", "Edit", "Options", "View", "Tools", "Extensions", "Window", "Help"].map((m) => html`<span>${m}</span>`)}</div>
      <pt-toolbar class="t1" .items=${row1} .help=${true}></pt-toolbar>
      <pt-toolbar class="t2" .items=${row2} .active=${"lens"}></pt-toolbar>
      <div class="nav top">
        <span class="pill on b logical">${icon(svg`<circle cx="3.500" cy="9.500" r="1.700" fill="#fff"/><circle cx="7.500" cy="3.500" r="1.700" fill="#fff"/><circle cx="13" cy="10" r="2" fill="#fff"/><path d="M3.500 9.500l4-6L13 10" fill="none" stroke="#fff" stroke-dasharray="1 1" stroke-width=".8"/>`, 16, 14, "0 0 16 14")}Logical</span>
        <span class="pill m physical">${icon(svg`<path d="M3.500 1v12.500M13.500 1v12.500" stroke="#8fa0bb"/><path d="M4 2.500h9M4 5.500h9M4 8.500h9M4 11.500h9" stroke="#8fa0bb"/>`, 16, 14, "0 0 16 14")}Physical</span>
        <span>x: 1099, y: 203</span>
        <span class="push">Root</span>
        <span class="round grey first">${icon(svg`<path d="M5.500 4L2 7l3.500 3M2.500 7H10c4 0 4 5 .5 5.500" transform="translate(1 -1)" fill="none" stroke="#fff" stroke-width="2"/>`, 15, 15)}</span>
        <span class="round ring">${icon(svg`<path d="M3.500 11C.5 10.500.5 7 3.500 6.500 4 2.500 9.500 2 11 5c4 .5 4 5.500.5 6z" fill="#fff"/><path d="M12 8.500v6M9 11.500h6" stroke="#fff" stroke-width="1.800"/>`, 16, 16)}</span>
        <span class="round grey">${icon(svg`<path d="M8 1l2.500 3h-5zM8 15l2.500-3h-5zM1 8l3-2.500v5zM15 8l-3-2.500v5z" fill="#fff"/><circle cx="8" cy="8" r="1.800" fill="#ccc"/>`, 15, 15)}</span>
        <span class="round ring">${icon(svg`<path d="M1 13.500l4.500-6 3 3.500L10.500 9l4.500 4.500z" fill="#fff"/><circle cx="11.500" cy="4" r="2" fill="#fff"/>`, 15, 15)}</span>
        <span class="pill small clock">${icon(svg`<circle cx="6" cy="10" r="4.800" fill="#fff"/><path d="M7.500 3.500h8M7.500 6.500h8M13 1.500l2.500 2M9.500 8.500l-2-2" stroke="#fff" stroke-width="1.200"/><path d="M1.500 9h9M2 11.500h8" stroke="#8294b2" stroke-width=".7"/>`, 16, 16)}02:53:30</span>
      </div>
      <div class="main"><pt-workspace></pt-workspace><pt-simulation></pt-simulation></div>
      <div class="nav foot">
        <span>Time: 00:01:12.535</span>
        ${icon(svg`<circle cx="10.500" cy="10.500" r="9.700" fill="none" stroke="#c3cddb"/><path d="M8 5.600A5.500 5.500 0 1 0 13 5.600" fill="none" stroke="#fff" stroke-width="1.500"/><path d="M7.500 3l5 2.300-4.500 3z" fill="#fff"/><circle cx="10.500" cy="10.500" r="1.200" fill="#fff"/>`, 21, 21, "0 0 21 21")}
        <span>PLAY CONTROLS:</span>${playButtons()}
        <span class="pill on push small evlist">${icon(svg`<path d="M3 3h11M3 6h11M3 9h8M3 12h5M3 14.500h5" stroke="#fff" stroke-width="1.200"/><ellipse cx="12" cy="12.500" rx="3.500" ry="2.200" fill="none" stroke="#fff"/><circle cx="12" cy="12.500" r="1" fill="#fff"/>`, 17, 16, "0 0 17 16")}Event List</span>
        <span class="pill m real">${icon(svg`<circle cx="9" cy="8" r="7" fill="#fff"/><path d="M9 3.500V8l2.500 2" stroke="#10274d" stroke-width="1.300" fill="none"/>`, 17, 16, "0 0 17 16")}Realtime</span>
        <span class="pill on b sim">${icon(svg`<path d="M4 9l1-5h2V2h4v2h2l1.500 5z" fill="#fff"/><path d="M1 9.500h15l-2 4H3z" fill="#fff"/><path d="M2 15c2-1.500 3 .5 5-.5s3 .5 7 0" stroke="#fff" fill="none"/>`, 17, 16, "0 0 17 16")}Simulation</span>
      </div>
      <pt-bottom></pt-bottom>
      <win-taskbar></win-taskbar>
      <pt-arp class="dialog"></pt-arp>`;
  }
}
